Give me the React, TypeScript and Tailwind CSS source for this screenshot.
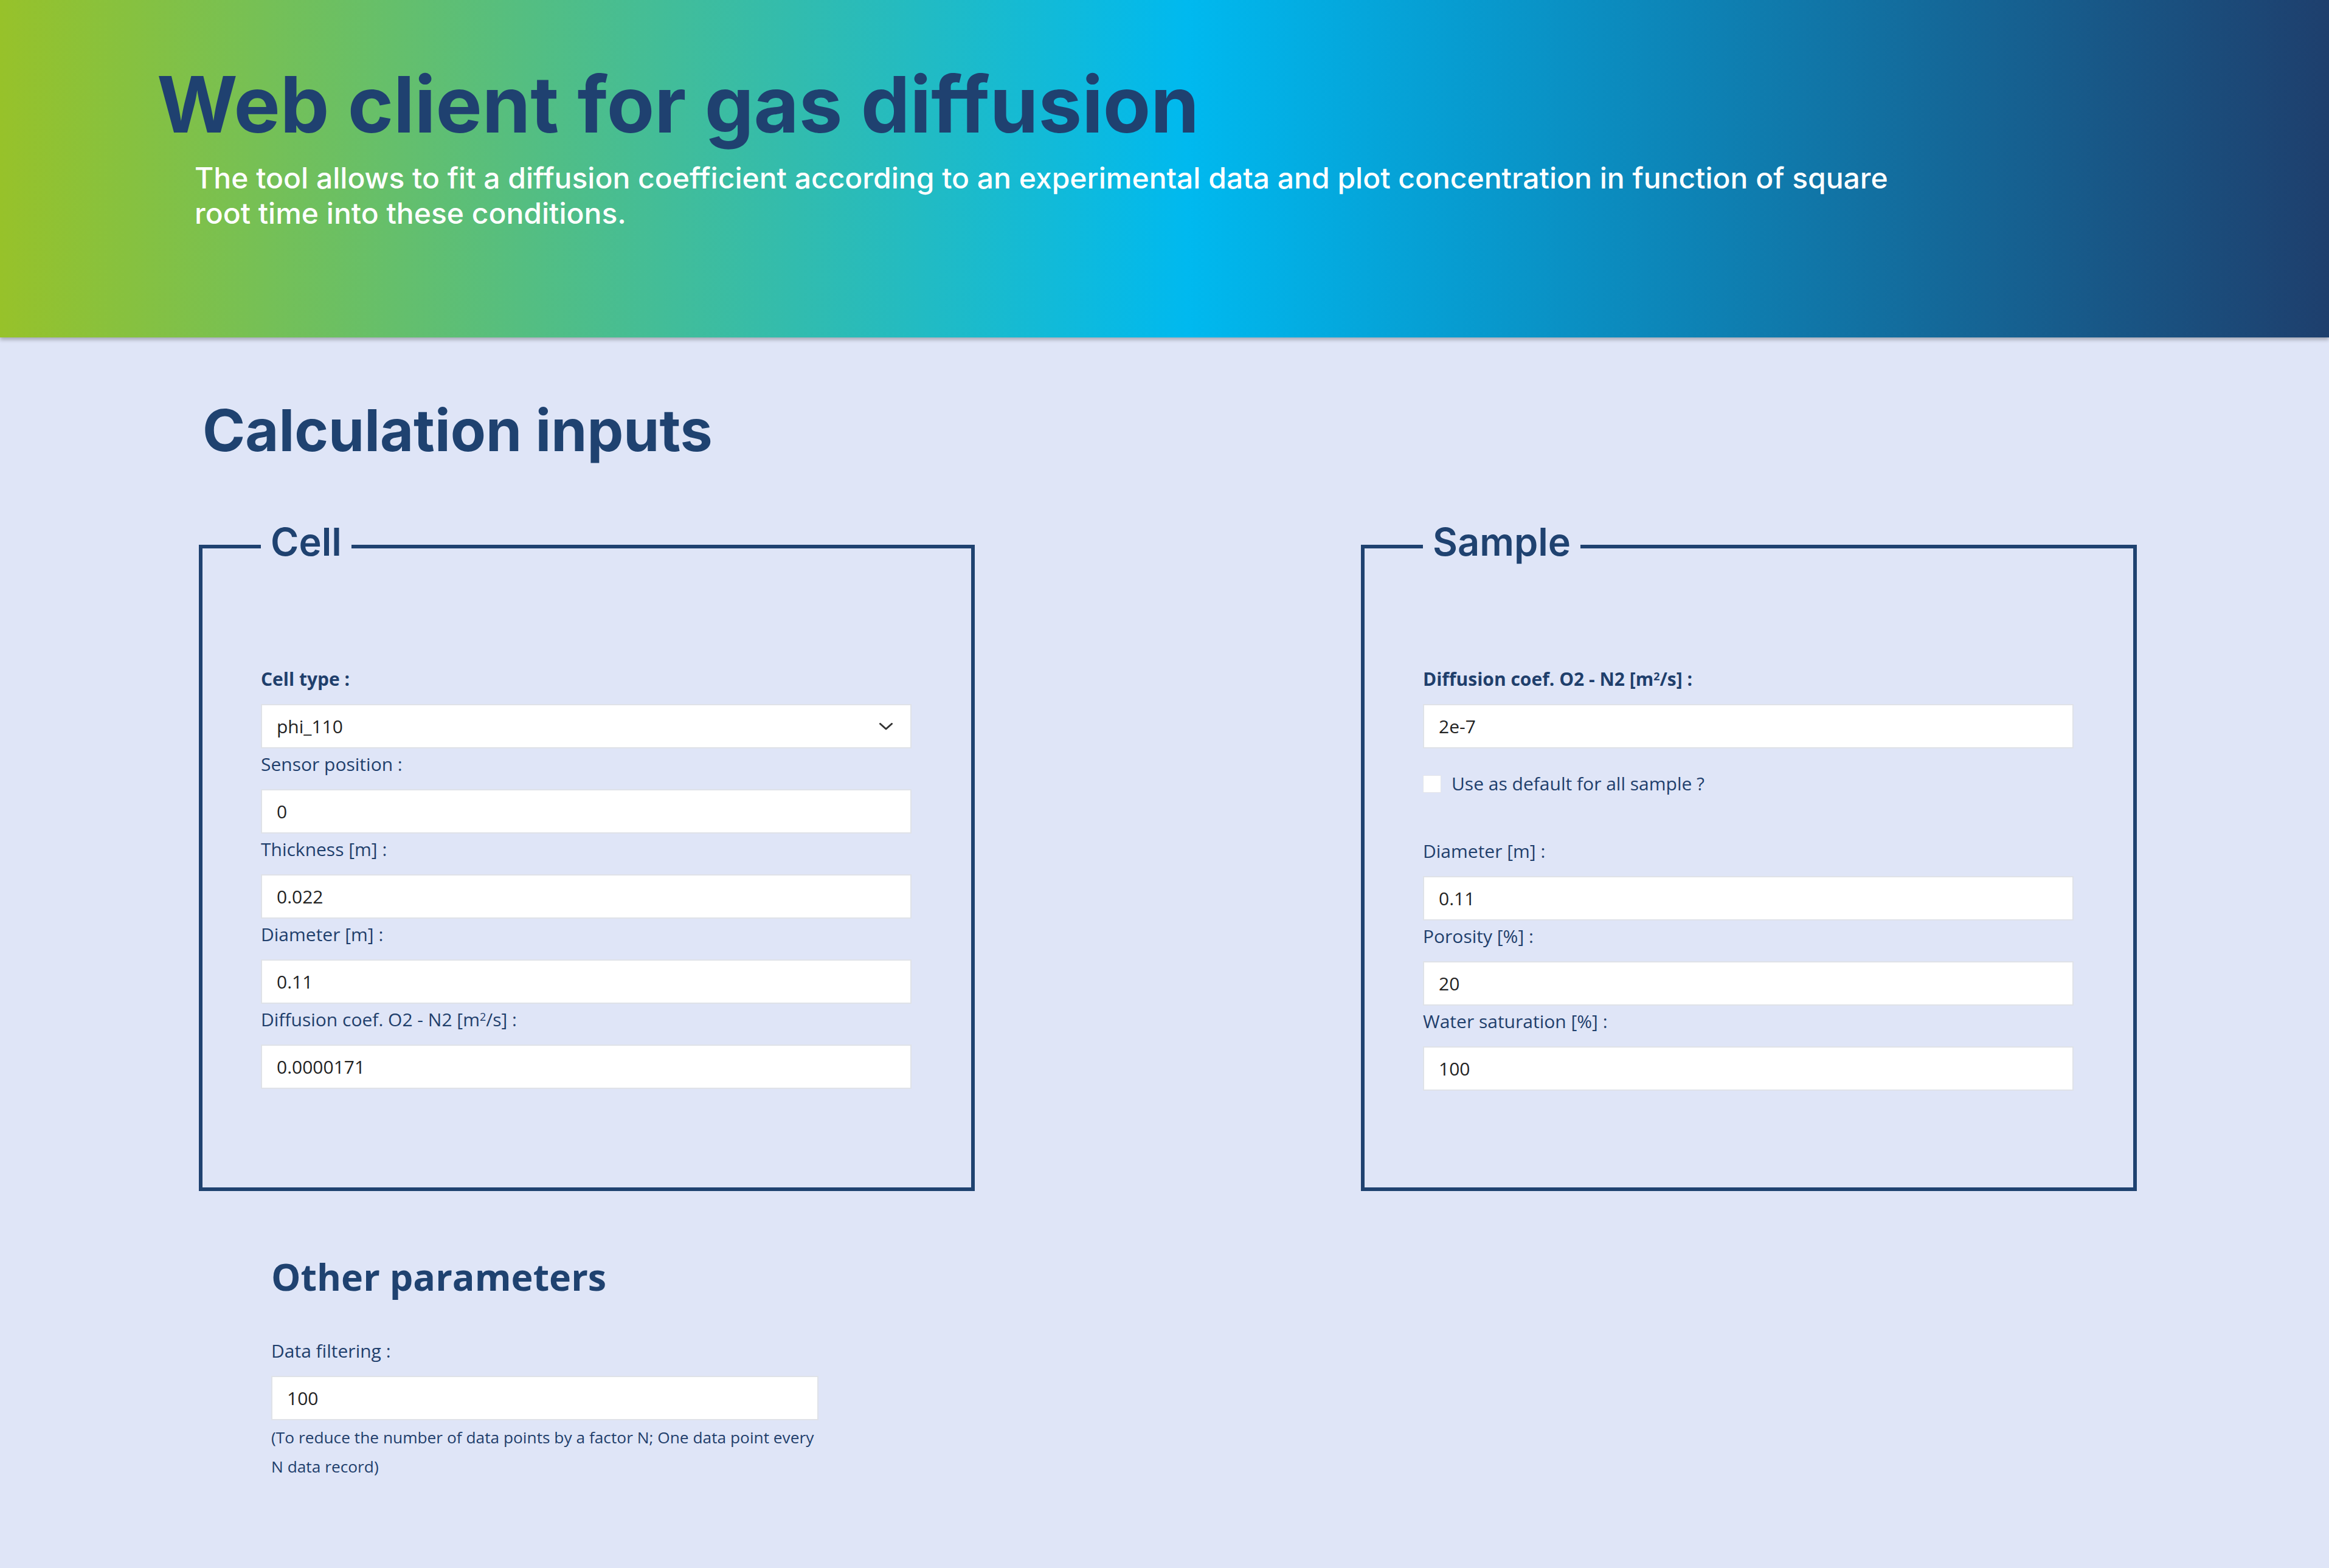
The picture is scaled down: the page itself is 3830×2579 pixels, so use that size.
// Web client for gas diffusion – calculation inputs page
import React from 'react'

const labelCls = "block pt-[2px] pb-[17px] leading-[48px] text-[30px] text-[#1f3f6c] font-['Open_Sans',sans-serif]"
const inputCls = "block w-full h-[73px] bg-white border-2 border-[#dfe2e8] pl-[24px] text-[30px] text-[#222] font-['Open_Sans',sans-serif] outline-none"

function Field({ label, value, bold }: { label: React.ReactNode; value: string; bold?: boolean }) {
  return (
    <div>
      <label className={`${labelCls} ${bold ? 'font-bold' : ''}`}>{label}</label>
      <input defaultValue={value} className={inputCls} />
    </div>
  )
}

const M2S = <>[m<sup className="text-[0.6em]">2</sup>/s] :</>

function Box({ title, children }: { title: string; children: React.ReactNode }) {
  return (
    <fieldset className="w-[1276px] border-[6px] border-[#1f4270] pl-[96px] pr-[98px] pt-[144px] pb-[159px]">
      <legend className="px-4 pb-4 text-[63px] leading-[80px] font-semibold text-[#1f4270] font-['Inter',sans-serif]">
        {title}
      </legend>
      {children}
    </fieldset>
  )
}

export default function App() {
  return (
    <div className="min-h-screen bg-[#dfe5f7]">
      {/* Bandeau */}
      <header className="h-[555px] bg-[linear-gradient(90deg,#97c22a_0%,#00b9ef_51%,#1e3f6d_100%)] shadow-[0_4px_6px_rgba(0,0,0,0.25)] pt-[108px] pl-[258px]">
        <h1 className="text-[128px] leading-none font-bold text-[#1f4170] font-['Inter',sans-serif]">
          Web client for gas diffusion
        </h1>
        <p className="mt-[28px] ml-[62px] w-[2840px] text-[48px] leading-[58px] font-medium text-white font-['Inter',sans-serif]">
          The tool allows to fit a diffusion coefficient according to an experimental data and plot concentration in function of square root time into these conditions.
        </p>
      </header>

      <main className="pl-[327px] pr-[316px] pt-[105px] pb-[120px]">
        <h2 className="ml-[6px] text-[95px] leading-none font-bold text-[#1f4270] font-['Inter',sans-serif]">
          Calculation inputs
        </h2>

        <div className="mt-[96px] flex justify-between items-stretch">
          <Box title="Cell">
            <div>
              <label className={`${labelCls} font-bold`}>Cell type :</label>
              <div className="relative">
                <select defaultValue="phi_110" className={`${inputCls} appearance-none`}>
                  <option value="phi_110">phi_110</option>
                </select>
                <svg className="absolute right-[31px] top-[31px] pointer-events-none" width="22" height="12" viewBox="0 0 22 12" fill="none">
                  <path d="M1.5 1.5 L11 10 L20.5 1.5" stroke="#333" strokeWidth="3" strokeLinecap="round" strokeLinejoin="round" />
                </svg>
              </div>
            </div>
            <Field label="Sensor position :" value="0" />
            <Field label="Thickness [m] :" value="0.022" />
            <Field label="Diameter [m] :" value="0.11" />
            <Field label={<>Diffusion coef. O2 - N2 {M2S}</>} value="0.0000171" />
          </Box>

          <Box title="Sample">
            <Field bold label={<>Diffusion coef. O2 - N2 {M2S}</>} value="2e-7" />
            <div className="mt-[44px] mb-[72px] flex items-center gap-[17px] h-[28px]">
              <input type="checkbox" className="appearance-none w-[30px] h-[29px] bg-white border border-[#e3e5ea]" />
              <span className="leading-[28px] text-[30px] text-[#1f3f6c] font-['Open_Sans',sans-serif]">Use as default for all sample ?</span>
            </div>
            <div className="-mt-[1px]">
              <Field label="Diameter [m] :" value="0.11" />
            </div>
            <Field label="Porosity [%] :" value="20" />
            <Field label="Water saturation [%] :" value="100" />
          </Box>
        </div>

        <section className="ml-[119px] mt-[110px] w-[900px]">
          <h3 className="text-[61px] leading-none font-bold text-[#1f4270] font-['Open_Sans',sans-serif]">
            Other parameters
          </h3>
          <div className="mt-[66px]">
            <Field label="Data filtering :" value="100" />
          </div>
          <p className="mt-[4px] text-[26.3px] leading-[48px] text-[#1f3f6c] font-['Open_Sans',sans-serif]">
            (To reduce the number of data points by a factor N; One data point every N data record)
          </p>
        </section>
      </main>
    </div>
  )
}
